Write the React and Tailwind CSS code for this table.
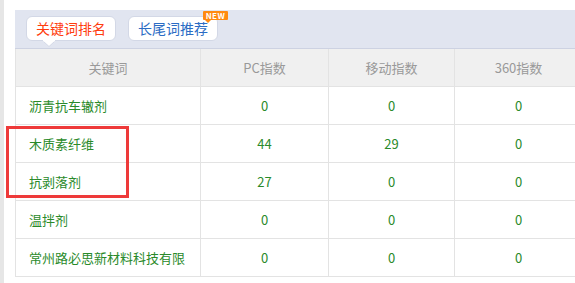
import React from "react";

const rows = [
  { kw: "沥青抗车辙剂", pc: 0, mobile: 0, s360: 0 },
  { kw: "木质素纤维", pc: 44, mobile: 29, s360: 0 },
  { kw: "抗剥落剂", pc: 27, mobile: 0, s360: 0 },
  { kw: "温拌剂", pc: 0, mobile: 0, s360: 0 },
  { kw: "常州路必思新材料科技有限", pc: 0, mobile: 0, s360: 0 },
];

const font = { fontFamily: '"Microsoft YaHei", "Noto Sans CJK SC", sans-serif' };

export default function App() {
  return (
    <div
      className="relative flex w-[575px] h-[283px] overflow-hidden bg-white"
      style={font}
    >
      {/* left gutter */}
      <div className="w-[4px] shrink-0 bg-[#e6e6e6]" />

      <div className="ml-[11px] pt-[10px] shrink-0">
        {/* tab bar */}
        <div className="flex h-[39px] w-[567px] items-start gap-[12px] border-b border-[#cdd2e2] bg-[#e1e5f0] pl-[11px] pt-[6px]">
          <div className="relative flex h-[25px] w-[90px] items-center justify-center rounded-[6px] border border-[#d3d8e6] bg-white text-[14px] text-[#ff3d0f]">
            关键词排名
            <svg
              className="absolute left-[16px] top-[23px]"
              width="12"
              height="7"
              viewBox="0 0 12 7"
            >
              <path d="M0 1 L6 6.5 L12 1" fill="#ffffff" stroke="#d3d8e6" strokeWidth="1" />
              <rect x="0" y="0" width="12" height="1.4" fill="#ffffff" />
            </svg>
          </div>
          <div className="relative flex h-[25px] w-[90px] items-center justify-center rounded-[6px] border border-[#d3d8e6] bg-white text-[14px] text-[#2b6cc4]">
            长尾词推荐
            <div className="absolute left-[74px] top-[-6px]">
              <div className="flex h-[9px] w-[25px] items-center justify-center rounded-[1px] bg-[#ff8a10] text-[8px] font-bold leading-none tracking-[0.5px] text-white">
                NEW
              </div>
              <div className="ml-[2px] h-0 w-0 border-l-[3px] border-r-[3px] border-t-[3px] border-l-transparent border-r-transparent border-t-[#ff8a10]" />
            </div>
          </div>
        </div>

        {/* table */}
        <div className="grid w-[567px] grid-cols-[185px_128px_126px_128px] border-l border-[#e3e3e3] text-[13px]">
          {["关键词", "PC指数", "移动指数", "360指数"].map((h) => (
            <div
              key={h}
              className="flex h-[38px] items-center justify-center border-b border-r border-[#e3e3e3] bg-[#f0f0f0] text-[#999999]"
            >
              {h}
            </div>
          ))}
          {rows.map((r) => (
            <React.Fragment key={r.kw}>
              <div className="flex h-[38px] items-center border-b border-r border-[#e3e3e3] pl-[13px] text-[#2a8a2a]">
                {r.kw}
              </div>
              <div className="flex h-[38px] items-center justify-center border-b border-r border-[#e3e3e3] text-[#2a8a2a]">
                {r.pc}
              </div>
              <div className="flex h-[38px] items-center justify-center border-b border-r border-[#e3e3e3] text-[#2a8a2a]">
                {r.mobile}
              </div>
              <div className="flex h-[38px] items-center justify-center border-b border-r border-[#e3e3e3] text-[#2a8a2a]">
                {r.s360}
              </div>
            </React.Fragment>
          ))}
        </div>
      </div>

      {/* annotation box */}
      <div className="absolute left-[6px] top-[126px] h-[72px] w-[123px] border-[3px] border-[#ee3a3a]" />
    </div>
  );
}
